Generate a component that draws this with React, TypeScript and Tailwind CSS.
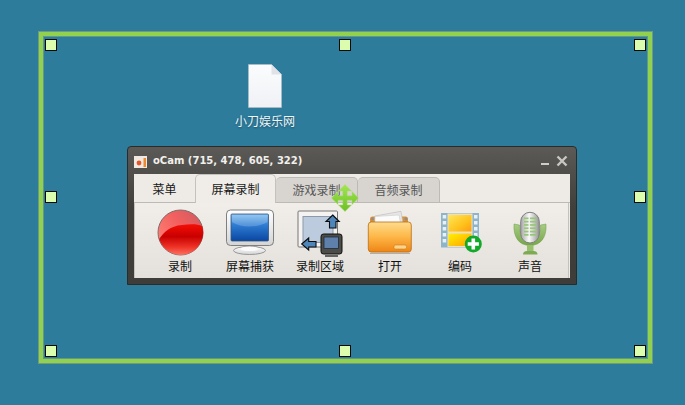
import React from "react";

const cjk = "font-['Noto_Sans_CJK_SC','Liberation_Sans',sans-serif]";

const handles = [
  "left-[45px] top-[39px]",
  "left-[339px] top-[39px]",
  "left-[634px] top-[39px]",
  "left-[45px] top-[191px]",
  "left-[634px] top-[191px]",
  "left-[45px] top-[345px]",
  "left-[339px] top-[345px]",
  "left-[634px] top-[345px]",
];

const RecordIcon = () => (
  <svg width="48" height="48" viewBox="0 0 48 48">
    <defs>
      <linearGradient id="recTop" x1="0" y1="0.7" x2="1" y2="0">
        <stop offset="0" stopColor="#ff8074" />
        <stop offset="0.5" stopColor="#f2605f" />
        <stop offset="1" stopColor="#cc5a60" />
      </linearGradient>
      <linearGradient id="recLow" x1="0" y1="0" x2="0" y2="1">
        <stop offset="0" stopColor="#f40e06" />
        <stop offset="0.4" stopColor="#c80000" />
        <stop offset="0.72" stopColor="#ec3024" />
        <stop offset="1" stopColor="#ff7060" />
      </linearGradient>
    </defs>
    <circle cx="24.5" cy="23.5" r="22.5" fill="url(#recTop)" stroke="#7f6c6c" strokeWidth="1" />
    <path d="M3.200 30C8 23 14 17 26 16C34 15 42 15 46.200 17A22 22 0 0 1 3.200 30Z" fill="url(#recLow)" />
  </svg>
);

const ScreenIcon = () => (
  <svg width="48" height="48" viewBox="0 0 48 48">
    <defs>
      <linearGradient id="scrBlue" x1="0" y1="0" x2="0" y2="1">
        <stop offset="0" stopColor="#7cbcf0" />
        <stop offset="0.4" stopColor="#2f7dd2" />
        <stop offset="1" stopColor="#0a46a2" />
      </linearGradient>
      <linearGradient id="scrBody" x1="0" y1="0" x2="0" y2="1">
        <stop offset="0" stopColor="#ffffff" />
        <stop offset="1" stopColor="#d4d4d4" />
      </linearGradient>
    </defs>
    <path d="M17 36h14l1 5H16Z" fill="#bdbdbd" />
    <ellipse cx="23.500" cy="41.500" rx="16" ry="4" fill="url(#scrBody)" stroke="#8f8f8f" strokeWidth="0.900" />
    <ellipse cx="23.500" cy="39.800" rx="9" ry="2.300" fill="#fbfbfb" />
    <rect x="0.500" y="1" width="47" height="35.500" rx="4" fill="url(#scrBody)" stroke="#7f7f7f" />
    <rect x="5" y="5" width="37.500" height="27" rx="1" fill="url(#scrBlue)" stroke="#34557f" strokeWidth="0.800" />
    <path d="M6 6h35.500v7C32 19 15 19 6 13Z" fill="#ffffff" opacity="0.2" />
  </svg>
);

const AreaIcon = () => (
  <svg width="48" height="48" viewBox="0 0 48 48">
    <rect x="2" y="2" width="39.500" height="36" rx="1" fill="#f4f3f1" stroke="#777777" />
    <rect x="7" y="7.500" width="30" height="26" fill="#bccbdd" stroke="#8b99aa" />
    <path d="M36.700 6l6.500 6.500H40V19h-6.500v-6.500H30Z" fill="#4f86ba" stroke="#0b0b0b" strokeWidth="1.100" />
    <path d="M5.700 35l7-6v3.500H20v5.500h-7.300V41Z" fill="#4f86ba" stroke="#0b0b0b" strokeWidth="1.100" />
    <rect x="25" y="25" width="21" height="20" rx="2.500" fill="#4d4c49" stroke="#0e0e0e" />
    <rect x="28" y="28" width="14.500" height="11.500" fill="#5f80aa" stroke="#1f2c3a" strokeWidth="0.800" />
    <path d="M29 47h13" stroke="#3a3a38" strokeWidth="1.500" />
  </svg>
);

const FolderIcon = () => (
  <svg width="48" height="48" viewBox="0 0 48 48">
    <defs>
      <linearGradient id="fldFront" x1="0" y1="0" x2="0" y2="1">
        <stop offset="0" stopColor="#ffdc8e" />
        <stop offset="0.5" stopColor="#fdb646" />
        <stop offset="1" stopColor="#ee8516" />
      </linearGradient>
    </defs>
    <path d="M4 10q0-2.500 2.500-2.500h33q2.500 0 2.500 2.500v6H4Z" fill="#d8923a" />
    <circle cx="6.500" cy="10" r="1.400" fill="#8d8d8d" />
    <circle cx="40" cy="10" r="1.400" fill="#8d8d8d" />
    <path d="M9 7l26-4.700 2 11.700H9Z" fill="#e6e6e6" stroke="#b8b8b8" strokeWidth="0.600" />
    <path d="M9 7.500l24-1.500 1.500 8H9Z" fill="#fbfbfb" stroke="#cdcdcd" strokeWidth="0.600" />
    <rect x="2.300" y="13" width="43" height="30" rx="3" fill="url(#fldFront)" stroke="#b86f16" strokeWidth="0.800" />
    <rect x="28" y="36" width="12.500" height="4" rx="1.500" fill="#ffd48a" stroke="#c77c1c" strokeWidth="0.600" />
    <path d="M4 44.300h40" stroke="#85796a" strokeWidth="1.200" opacity="0.500" />
  </svg>
);

const FilmIcon = () => (
  <svg width="48" height="48" viewBox="0 0 48 48">
    <defs>
      <linearGradient id="fimA" x1="0" y1="0" x2="1" y2="1">
        <stop offset="0" stopColor="#ffe65a" />
        <stop offset="0.6" stopColor="#ffc21c" />
        <stop offset="1" stopColor="#ff9c10" />
      </linearGradient>
      <linearGradient id="fimB" x1="0" y1="0" x2="1" y2="1">
        <stop offset="0" stopColor="#fff200" />
        <stop offset="1" stopColor="#ffa000" />
      </linearGradient>
    </defs>
    <rect x="5" y="4" width="38" height="34.500" fill="#8fb4c8" />
    <rect x="11.500" y="4.500" width="25" height="33.500" fill="#e8e0c8" />
    <rect x="12.500" y="6" width="23" height="16.500" fill="url(#fimA)" />
    <rect x="12.500" y="24.500" width="23" height="12.500" fill="url(#fimB)" />
    {[6, 12, 18, 24, 30].map((y) => (
      <g key={y} fill="#e6f0f5">
        <rect x="6.700" y={y} width="3.500" height="3.500" />
        <rect x="38" y={y} width="3.500" height="3.500" />
      </g>
    ))}
    <circle cx="37.300" cy="35" r="8.500" fill="#12a82a" />
    <path d="M35.500 29.500h3.600v3.800h3.800v3.400h-3.800v3.800h-3.600v-3.800h-3.800v-3.400h3.800Z" fill="#ffffff" />
  </svg>
);

const MicIcon = () => (
  <svg width="48" height="48" viewBox="0 0 48 48">
    <defs>
      <linearGradient id="micBody" x1="0" y1="0" x2="1" y2="0">
        <stop offset="0" stopColor="#a6a6a6" />
        <stop offset="0.45" stopColor="#fafafa" />
        <stop offset="1" stopColor="#939393" />
      </linearGradient>
      <linearGradient id="micStand" x1="0" y1="0" x2="0" y2="1">
        <stop offset="0" stopColor="#a6cc84" />
        <stop offset="1" stopColor="#76a648" />
      </linearGradient>
    </defs>
    <path d="M8 15l5.500 1c0 9 3 15 10.500 15s10.500-6 10.500-15l5.500-1c1 13-5 21.500-16 21.500S7 28 8 15Z" fill="url(#micStand)" stroke="#6f9a48" strokeWidth="0.500" />
    <path d="M21 36h6.500v6H21Z" fill="#96bf6e" />
    <path d="M17 45.500q0-3.500 4-3.500h6.500q4 0 4 3.500Z" fill="#7eaa52" />
    <rect x="14.700" y="3.300" width="18.600" height="30.700" rx="9.300" fill="url(#micBody)" stroke="#7f7f7f" />
    <g fill="#98c678">
      <rect x="18" y="8.500" width="12.500" height="1.700" />
      <rect x="18" y="11.800" width="12.500" height="1.700" />
      <rect x="18" y="15.100" width="12.500" height="1.700" />
      <rect x="18" y="18.400" width="12.500" height="1.700" />
      <rect x="18" y="21.700" width="12.500" height="1.700" />
      <rect x="18" y="25" width="12.500" height="1.700" />
    </g>
    <rect x="22.500" y="8" width="1.500" height="19" fill="#f2f2f2" />
  </svg>
);

const items = [
  { label: "录制", icon: <RecordIcon /> },
  { label: "屏幕捕获", icon: <ScreenIcon /> },
  { label: "录制区域", icon: <AreaIcon /> },
  { label: "打开", icon: <FolderIcon /> },
  { label: "编码", icon: <FilmIcon /> },
  { label: "声音", icon: <MicIcon /> },
];

export default function App() {
  return (
    <div className={`relative w-[685px] h-[405px] overflow-hidden bg-[#2e7c9c] ${cjk}`}>
      {/* selection frame */}
      <div className="absolute left-[38px] top-[31px] w-[615px] h-[333px] border border-[#6f9a7e]">
        <div className="w-full h-full border-4 border-[#92d050]">
          <div className="w-full h-full border border-[#5f9a88]" />
        </div>
      </div>

      {/* desktop file */}
      <div className="absolute left-[225px] top-[64px] w-[80px] flex flex-col items-center">
        <svg width="34" height="44" viewBox="0 0 34 44">
          <defs>
            <linearGradient id="docBody" x1="0" y1="0" x2="0" y2="1">
              <stop offset="0" stopColor="#fbfcfd" />
              <stop offset="1" stopColor="#eff1f5" />
            </linearGradient>
          </defs>
          <path d="M0.500 0.500H23.500L33.500 10.500V43.500H0.500Z" fill="url(#docBody)" stroke="#aebfca" strokeWidth="0.600" />
          <path d="M23.500 0.500V10.500H33.500Z" fill="#dfe3e8" />
        </svg>
        <span className="mt-[5px] text-[12px] leading-[16px] text-[#eef6fa] [text-shadow:0_1px_2px_#1c4f66]">小刀娱乐网</span>
      </div>

      {/* oCam window */}
      <div className="absolute left-[127px] top-[146px] w-[450px] h-[139px] rounded-t-[4px] border border-[#2c2b28] bg-[linear-gradient(#5c5a56,#403f3b_45%,#3e3d39)] px-[6px] pb-[6px] flex flex-col">
        <div className="h-[27px] shrink-0 flex items-center pr-[2px]">
          <svg width="13" height="12" viewBox="0 0 13 12" className="shrink-0 mt-[3px]">
            <rect width="13" height="12" fill="#efe9e2" />
            <circle cx="5" cy="7" r="2.400" fill="#e2562a" />
            <rect x="9.500" y="2" width="2.500" height="9" fill="#ec8a34" />
          </svg>
          <span className="ml-[6px] font-['DejaVu_Sans',sans-serif] font-bold text-[10px] text-[#f2f0ec]">oCam (715, 478, 605, 322)</span>
          <span className="ml-auto mt-[7px] w-[8px] h-[2px] bg-[#cfcdc8]" />
          <svg width="12" height="12" viewBox="0 0 12 12" className="ml-[7px]">
            <path d="M1.500 1.500l9 9M10.500 1.500l-9 9" stroke="#c9c7c2" strokeWidth="2.400" />
          </svg>
        </div>
        <div className="flex-1 flex flex-col bg-[#eeebe6]">
          <div className="h-[29px] shrink-0 flex items-end text-[12px] leading-[16px]">
            <div className="w-[61px] h-[28px] flex items-center justify-center text-[#1a1a1a] border-b border-[#bcbab4]">菜单</div>
            <div className="w-[81px] h-[29px] flex items-center justify-center text-[#1a1a1a] rounded-t-[5px] border border-b-0 border-[#c4c2bc] bg-[#f0ede8]">屏幕录制</div>
            <div className="w-[82px] h-[26px] flex items-center justify-center text-[#555] rounded-t-[5px] border border-l-0 border-[#bcbab4] bg-[#d8d5d1]">游戏录制</div>
            <div className="w-[82px] h-[26px] flex items-center justify-center text-[#555] rounded-t-[5px] border border-l-0 border-[#bcbab4] bg-[#d8d5d1]">音频录制</div>
            <div className="flex-1 h-[1px] bg-[#bcbab4]" />
          </div>
          <div className="flex-1 flex pl-[10px] pt-[6px] mr-[1px] border-l border-r border-[#c4c2bc] bg-[linear-gradient(#f1eee9,#e4e1dc)]">
            {items.map((item) => (
              <div key={item.label} className="w-[70px] flex flex-col items-center">
                <div className="w-[48px] h-[48px]">{item.icon}</div>
                <span className="mt-[1px] text-[12px] leading-[16px] text-[#111]">{item.label}</span>
              </div>
            ))}
          </div>
        </div>
      </div>

      {/* move cursor */}
      <svg width="28" height="28" viewBox="0 0 28 28" className="absolute left-[331px] top-[184px]">
        <defs>
          <linearGradient id="moveFill" x1="0" y1="0" x2="0" y2="1">
            <stop offset="0" stopColor="#a2e652" />
            <stop offset="1" stopColor="#6cc022" />
          </linearGradient>
        </defs>
        <path
          d="M14 0.500L20.500 7H16.200V11.800H21V7.500L27.500 14L21 20.500V16.200H16.200V21H20.500L14 27.500L7.500 21H11.800V16.200H7V20.500L0.500 14L7 7.500V11.800H11.800V7H7.500Z"
          fill="url(#moveFill)"
          stroke="#b0d880"
          strokeWidth="0.500"
        />
      </svg>

      {/* resize handles */}
      {handles.map((pos) => (
        <div key={pos} className={`absolute ${pos} w-[12px] h-[12px] border border-[#0a0a0a] bg-[#dcfcae]`} />
      ))}
    </div>
  );
}
